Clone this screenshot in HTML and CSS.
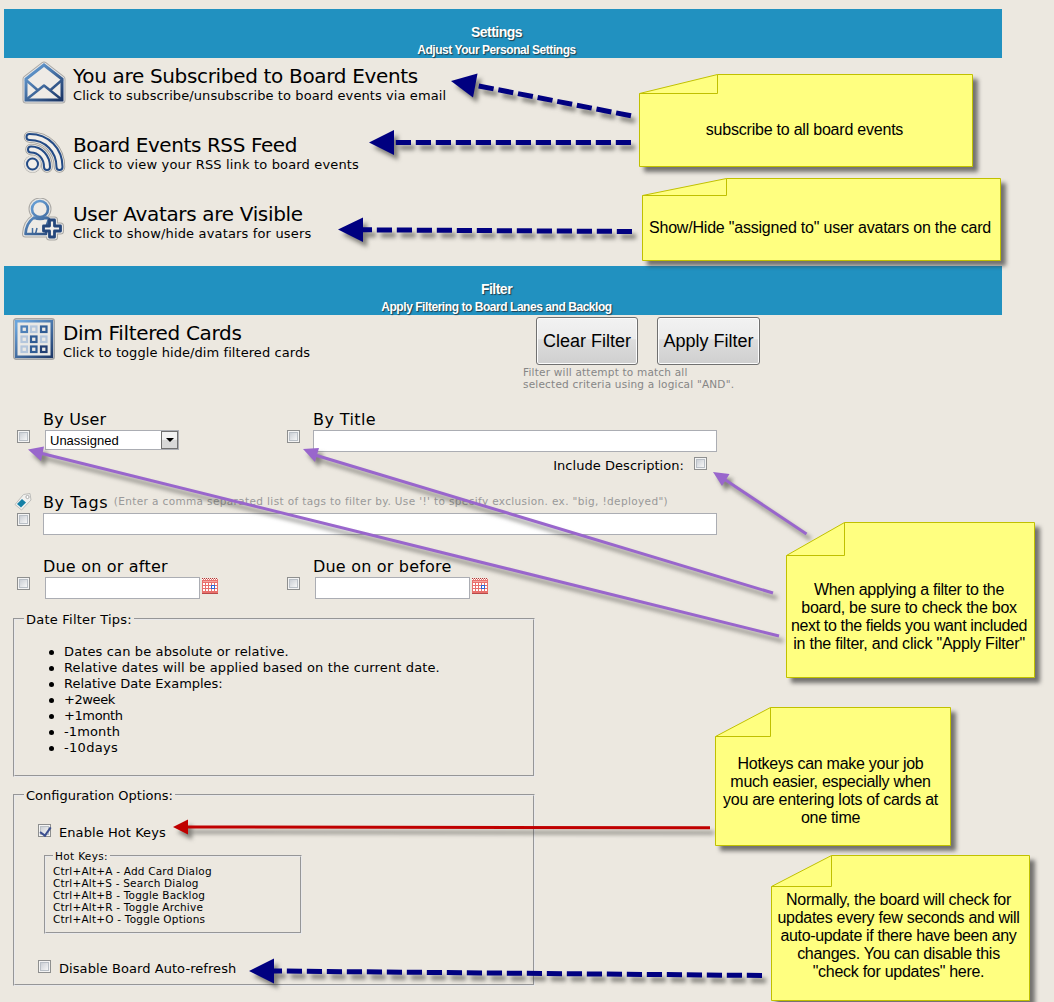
FILE: index.html
```html
<!DOCTYPE html>
<html lang="en">
<head>
<meta charset="utf-8">
<title>Board Settings</title>
<link rel="stylesheet" href="styles.css">
</head>
<body>
<main class="panel">
  <header class="bar"><h1>Settings</h1><p>Adjust Your Personal Settings</p></header>
  <section class="settings">
    <div class="option">
      <svg class="icon" width="46" height="46" viewBox="0 0 46 46">
        <defs><linearGradient id="blue" gradientUnits="userSpaceOnUse" x1="8" y1="4" x2="38" y2="42"><stop offset="0" stop-color="#6ba5dc"/><stop offset="1" stop-color="#1b3565"/></linearGradient></defs>
        <g fill="none" stroke-linejoin="round" stroke-linecap="round">
          <path d="M23 5 41 19V40H5V19Z" stroke="#aaa9a7" stroke-width="7"/>
          <path d="M23 5 41 19V40H5V19Z" stroke="#e8e8e8" stroke-width="5"/>
          <path d="M23 5 41 19V40H5V19Z" fill="#eeebe6" stroke="url(#blue)" stroke-width="3" stroke-linejoin="miter"/>
          <path d="M5 20 16.500 30M41 20 29.500 30M6 39 23 25.500 40 39" stroke="url(#blue)" stroke-width="2.500"/>
        </g>
      </svg>
      <div class="label subscribed"><h2>You are Subscribed to Board Events</h2><p>Click to subscribe/unsubscribe to board events via email</p></div>
    </div>
    <div class="option">
      <svg class="icon" width="46" height="46" viewBox="0 0 46 46">
        <g fill="none" stroke-linecap="round">
          <g stroke="#a09e99" stroke-width="11.500"><path d="M8.500 8C26 8 38.500 21 38.500 38M10 20.500C19 20.500 26 28 26 38"/><circle cx="11.500" cy="35" r="3"/></g>
          <g stroke="#e6e4e0" stroke-width="9.800"><path d="M8.500 8C26 8 38.500 21 38.500 38M10 20.500C19 20.500 26 28 26 38"/><circle cx="11.500" cy="35" r="3.500"/></g>
          <g stroke="#234b86" stroke-width="8"><path d="M8.500 8C26 8 38.500 21 38.500 38M10 20.500C19 20.500 26 28 26 38"/></g>
          <g stroke="#f1eee9" stroke-width="4"><path d="M8.500 8C26 8 38.500 21 38.500 38M10 20.500C19 20.500 26 28 26 38"/></g>
          <circle cx="11.500" cy="35" r="5.500" fill="#f1eee9" stroke="#234b86" stroke-width="2"/>
        </g>
      </svg>
      <div class="label rss"><h2>Board Events RSS Feed</h2><p>Click to view your RSS link to board events</p></div>
    </div>
    <div class="option last">
      <svg class="icon" width="46" height="46" viewBox="0 0 46 46">
        <g fill="none" stroke-linejoin="round">
          <g stroke="#aaa8a4" stroke-width="7"><circle cx="19" cy="11" r="8"/><path d="M13 20C8 23 5 28 4.500 36H27M28.500 22H33.500V28H39.500V33H33.500V39H28.500V33H22.500V28H28.500Z"/></g>
          <g stroke="#e8e7e4" stroke-width="5"><circle cx="19" cy="11" r="8"/><path d="M13 20C8 23 5 28 4.500 36H27M28.500 22H33.500V28H39.500V33H33.500V39H28.500V33H22.500V28H28.500Z"/></g>
          <g stroke="url(#blue)" stroke-width="2.600" fill="#eeebe6"><circle cx="19" cy="11" r="8"/><path d="M13 19.500C8 23 5 28 4.500 36H25V30L28 21 25 19.500C21 21.500 17 21.500 13 19.500Z"/><path d="M11.500 30V36M16 30 14.500 36" stroke-width="1.500"/></g>
          <path d="M28.500 22H33.500V28H39.500V33H33.500V39H28.500V33H22.500V28H28.500Z" fill="#f2efeb" stroke="#25477c" stroke-width="2.800"/>
        </g>
      </svg>
      <div class="label avatars"><h2>User Avatars are Visible</h2><p>Click to show/hide avatars for users</p></div>
    </div>
  </section>

  <header class="bar"><h1>Filter</h1><p>Apply Filtering to Board Lanes and Backlog</p></header>
  <section class="filter">
    <div class="tools">
      <svg class="grid-icon" width="42" height="42" viewBox="0 0 42 42">
        <rect x=".7" y=".7" width="40.600" height="40.600" rx="2.500" fill="#dcdcda" stroke="#a5a5a4" stroke-width="1.400"/>
        <rect x="3.200" y="3.200" width="35.600" height="35.600" fill="#eae9e6" stroke="url(#blue)" stroke-width="2.600"/>
        <g fill="none" stroke-width="2.200">
          <g stroke="#b4c6dc"><rect x="18" y="8.500" width="5.500" height="5.500"/><rect x="8.500" y="18.500" width="5.500" height="5.500"/><rect x="28" y="18.500" width="5.500" height="5.500"/><rect x="8.500" y="28.500" width="5.500" height="5.500"/></g>
          <rect x="8.500" y="8.500" width="5.500" height="5.500" stroke="#4e80b8"/><g stroke="#315c94"><rect x="28" y="8.500" width="5.500" height="5.500"/><rect x="18" y="18.500" width="5.500" height="5.500"/><rect x="18" y="28.500" width="5.500" height="5.500"/></g><rect x="28" y="28.500" width="5.500" height="5.500" stroke="#223f73"/>
        </g>
      </svg>
      <div class="label dim"><h2>Dim Filtered Cards</h2><p>Click to toggle hide/dim filtered cards</p></div>
      <div class="actions">
        <div class="buttons"><button class="btn clear">Clear Filter</button><button class="btn apply">Apply Filter</button></div>
        <p class="hint">Filter will attempt to match all<br>selected criteria using a logical "AND".</p>
      </div>
    </div>

    <div class="fields first">
      <input type="checkbox" class="check">
      <div class="field">
        <label>By User</label>
        <div class="select"><span>Unassigned</span><i class="drop"></i></div>
      </div>
      <input type="checkbox" class="check">
      <div class="field">
        <label class="by-title">By Title</label>
        <input type="text" class="text title">
        <div class="include"><span>Include Description:</span><input type="checkbox" class="check"></div>
      </div>
    </div>

    <div class="fields tags">
      <div class="tagcol">
        <svg width="20" height="20" viewBox="0 0 20 20"><path d="M2 12.500 10.500 2.500 17 1.500 18 8 8.500 18Z" fill="#f1f1ef" stroke="#bdbdba" stroke-linejoin="round"/><circle cx="14.500" cy="5" r="1.600" fill="#fff" stroke="#aaa"/><path d="M4 12 9 7 13 10.500 8 15.500Z" fill="#1580a6"/></svg>
        <input type="checkbox" class="check">
      </div>
      <div class="field">
        <label class="by-tags">By Tags <small>(Enter a comma separated list of tags to filter by. Use '!' to specify exclusion. ex. "big, !deployed")</small></label>
        <input type="text" class="text long">
      </div>
    </div>

    <div class="fields dates">
      <input type="checkbox" class="check">
      <div class="field">
        <label>Due on or after</label>
        <div class="date"><input type="text" class="text"><svg class="cal" width="16" height="16" viewBox="0 0 16 16"><g id="calendar"><rect y="1" width="16" height="15" fill="#e8706c"/><path d="M0 1.500H16" stroke="#fff" stroke-dasharray="1 1"/><path d="M0 .5H16" stroke="#b33" stroke-dasharray="1 1"/><path d="M1 3.500H15" stroke="#f6a39d"/><g fill="#fff"><path d="M1 5h2v2H1zM4 5h2v2H4zM7 5h2v2H7zM10 5h2v2h-2zM13 5h2v2h-2zM1 8h2v2H1zM4 8h2v2H4zM7 8h2v2H7zM10 8h2v2h-2zM13 8h2v2h-2zM1 11h2v2H1zM4 11h2v2H4zM7 11h2v2H7zM10 11h2v2h-2zM13 11h2v2h-2z"/></g><path d="M0 15.500H16" stroke="#b84a48"/><rect x="9.500" y="7.500" width="3" height="3" fill="#fff" stroke="#2b66d8"/></g></svg></div>
      </div>
      <input type="checkbox" class="check">
      <div class="field">
        <label>Due on or before</label>
        <div class="date"><input type="text" class="text"><svg class="cal" width="16" height="16" viewBox="0 0 16 16"><use href="#calendar"/></svg></div>
      </div>
    </div>

    <fieldset class="tips">
      <legend>Date Filter Tips:</legend>
      <ul>
        <li>Dates can be absolute or relative.</li>
        <li>Relative dates will be applied based on the current date.</li>
        <li class="snug">Relative Date Examples:</li>
        <li class="tight">+2week</li>
        <li class="tight">+1month</li>
        <li>-1month</li>
        <li class="loose">-10days</li>
      </ul>
    </fieldset>

    <fieldset class="config">
      <legend>Configuration Options:</legend>
      <div class="check-row"><input type="checkbox" class="check" checked><span>Enable Hot Keys</span></div>
      <fieldset class="hotkeys">
        <legend>Hot Keys:</legend>
        <p>Ctrl+Alt+A - Add Card Dialog</p>
        <p>Ctrl+Alt+S - Search Dialog</p>
        <p>Ctrl+Alt+B - Toggle Backlog</p>
        <p>Ctrl+Alt+R - Toggle Archive</p>
        <p>Ctrl+Alt+O - Toggle Options</p>
      </fieldset>
      <div class="check-row"><input type="checkbox" class="check"><span>Disable Board Auto-refresh</span></div>
    </fieldset>
  </section>
</main>

<svg class="arrows" width="1054" height="1002" viewBox="0 0 1054 1002">
  <g class="navy">
    <path class="dash" d="M631 115.800 478 85.800"/><path class="head" d="M451 81 477.500 73.500 473 97.500Z"/>
    <path class="dash" d="M631 142.500H394"/><path class="head" d="M369 142.500 394 130V155Z"/>
    <path class="dash" d="M632 231.500 362 229.800"/><path class="head" d="M338 229.500 363 217.500V242Z"/>
    <path class="dash" d="M762 975.500 274 971"/><path class="head" d="M249 971 274 958.500V983.500Z"/>
  </g>
  <g class="purple">
    <path d="M779 636 40 453"/><path class="head" d="M28 449.500 44 446.500 41 461Z"/>
    <path d="M773 593 315 455"/><path class="head" d="M303 449 319 448 315 462Z"/>
    <path d="M806.500 534 724 479"/><path class="head" d="M713 472 729.500 474 722 486Z"/>
  </g>
  <g class="red"><path d="M710 827.800 187 827"/><path class="head" d="M173 827 188 819.500V834.500Z"/></g>
</svg>

<aside class="note n1"><svg width="334" height="93"><path d="M.5 19.500 78.500.5H333.500V92.500H.500Z"/><path class="fold" d="M.5 19.500H78.500V.5"/></svg><p>subscribe to all board events</p></aside>
<aside class="note n2"><svg width="359" height="83"><path d="M.5 17.500 84.500.5H358.500V82.500H.500Z"/><path class="fold" d="M.5 17.500H84.500V.5"/></svg><p>Show/Hide "assigned to" user avatars on the card</p></aside>
<aside class="note n3"><svg width="249" height="156"><path d="M.5 33.500 58.500.5H248.500V155.500H.500Z"/><path class="fold" d="M.5 33.500H58.500V.5"/></svg><p>When applying a filter to the<br>board, be sure to check the box<br><span class="narrow">next to the fields you want included</span><br><span class="wide">in the filter, and click "Apply Filter"</span></p></aside>
<aside class="note n4"><svg width="236" height="139"><path d="M.5 29.500 55.500.5H235.500V138.500H.500Z"/><path class="fold" d="M.5 29.500H55.500V.5"/></svg><p>Hotkeys can make your job<br>much easier, especially when<br>you are entering lots of cards at<br>one time</p></aside>
<aside class="note n5"><svg width="259" height="146"><path d="M.5 31.500 60.500.5H258.500V145.500H.500Z"/><path class="fold" d="M.5 31.500H60.500V.5"/></svg><p>Normally, the board will check for<br>updates every few seconds and will<br><span class="narrow">auto-update if there have been any</span><br>changes. You can disable this<br>"check for updates" here.</p></aside>
</body>
</html>
```
FILE: styles.css
```css
* { box-sizing: border-box; }
body {
  margin: 0;
  position: relative;
  width: 1054px;
  height: 1002px;
  overflow: hidden;
  background: #ece8e0;
  color: #000;
  font: 13px/16px Verdana, "DejaVu Sans", sans-serif;
}
h1, h2, p, ul { margin: 0; padding: 0; font-weight: normal; }

.panel { width: 1002px; padding: 9px 0 0 4px; }
.bar {
  height: 49px;
  padding: 14px 13px 0 0;
  background: #2191c0;
  color: #fff;
  text-align: center;
  text-shadow: 1px 1px 1px #233c48;
  font-family: Arial, "Liberation Sans", sans-serif;
}
.bar h1 { font-size: 14px; line-height: 19px; font-weight: bold; letter-spacing: -.5px; }
.bar p { font-size: 12px; line-height: 17px; font-weight: bold; letter-spacing: -.45px; }

.option { display: flex; height: 69px; padding-left: 17px; }
.option.last { height: 70px; }
.icon { margin-top: 2px; flex: none; }
.label { padding-top: 6px; white-space: nowrap; }
.option .label { margin-left: 6px; }
.label h2 { font-size: 20px; line-height: 24px; letter-spacing: -.33px; }
.label p { font-size: 13px; line-height: 16px; letter-spacing: .16px; }
.subscribed p { letter-spacing: .09px; }
.rss h2 { letter-spacing: -.41px; }
.dim p { letter-spacing: .07px; }

.filter { padding-left: 9px; }
.tools { display: flex; height: 95px; }
.grid-icon { margin-top: 3px; flex: none; }
.tools .label { width: 468px; padding-left: 8px; }
.buttons { display: flex; gap: 19px; padding: 2px 0 0 13px; }
.btn {
  height: 48px;
  padding: 0;
  border: 1px solid #707070;
  border-radius: 3px;
  background: linear-gradient(#f2f2f2 0, #ebebeb 46%, #dddddd 47%, #cfcfcf 100%);
  box-shadow: inset 0 0 0 1px #fcfcfc;
  font: 18px Arial, "Liberation Sans", sans-serif;
  white-space: nowrap;
}
.clear { width: 102px; }
.apply { width: 103px; }
.hint { margin-top: 1px; font-size: 10.5px; line-height: 12px; letter-spacing: .2px; color: #868686; white-space: nowrap; }

.fields { display: flex; padding-left: 4px; }
.fields.first { height: 83px; }
.fields.tags { height: 64px; }
.fields.dates { height: 55px; }
.check {
  appearance: none;
  width: 13px;
  height: 13px;
  margin: 20px 13px 0 0;
  flex: none;
  border: 1px solid #8e8f8f;
  background: linear-gradient(135deg, #cbcfd5, #f6f6f6) 2px 2px / 7px 7px no-repeat, #f4f4f4;
  box-shadow: inset 0 0 0 1px #f4f4f4, inset 0 0 0 2px #b9bfc6;
}
.check:checked::after {
  content: "";
  display: block;
  width: 5px;
  height: 9px;
  margin: 0 0 0 3px;
  border: solid #3c4f8f;
  border-width: 0 2px 2px 0;
  transform: rotate(35deg);
}
.field { width: 244px; }
.field:last-child { width: auto; }
.field label { display: block; height: 20px; font-size: 16px; line-height: 20px; letter-spacing: .2px; white-space: nowrap; }
.field .by-title { letter-spacing: .4px; }
.field .by-tags { letter-spacing: .6px; }
.text { display: block; height: 22px; margin: 0; padding: 0; border: 1px solid #abadb3; background: #fff; }
.title { width: 404px; }
.long { width: 674px; }
.select {
  display: flex;
  justify-content: space-between;
  width: 134px;
  height: 20px;
  margin-left: 2px;
  padding-left: 4px;
  border: 1px solid #abadb3;
  background: #fff;
  font: 13px/19px Arial, "Liberation Sans", sans-serif;
}
.drop {
  display: grid;
  place-items: center;
  width: 17px;
  height: 18px;
  border: 1px solid #707070;
  background: linear-gradient(#f2f2f2 46%, #d8d8d8 50%);
}
.drop::after { content: ""; border: 4px solid transparent; border-top-color: #000; border-bottom: 0; }
.include { display: flex; justify-content: flex-end; gap: 10px; padding: 5px 10px 0 0; line-height: 18px; letter-spacing: .05px; }
.include .check { margin: 0; }
.tagcol { width: 26px; height: 33px; }
.tagcol svg { display: block; margin: -1px 0 0 -4px; }
.tagcol .check { display: block; margin-top: 1px; }
.field small { position: relative; top: -3px; font-size: 10.5px; letter-spacing: .362px; color: #999; }
.date { display: flex; gap: 2px; padding-left: 2px; }
.date .text { width: 155px; }
.cal { margin-top: 1px; }

fieldset { margin: 0; min-width: 0; border: 2px groove #e9e9eb; }
legend { height: 14px; line-height: 16px; padding: 0 2px; }
.tips { width: 522px; height: 165px; padding: 18px 9px 0; letter-spacing: .13px; }
.tips legend { letter-spacing: .22px; }
.tips ul { padding-left: 40px; list-style: none; }
.tips li { display: flex; align-items: center; height: 16px; }
.tips .snug { letter-spacing: -.03px; }
.tips .tight { letter-spacing: -.4px; }
.tips .loose { letter-spacing: .3px; }
.tips li::before { content: ""; width: 5px; height: 5px; margin: 0 10px 0 -15px; border-radius: 50%; background: #000; }
.config { width: 522px; height: 198px; margin-top: 11px; padding: 22px 9px 0; }
.check-row { display: flex; gap: 8px; height: 16px; padding-left: 14px; line-height: 18px; letter-spacing: .07px; }
.check-row .check { margin: 0; }
.hotkeys { width: 258px; height: 84px; margin: 10px 0 26px 20px; padding: 3px 7px 0; font-size: 10.5px; line-height: 12px; letter-spacing: .2px; }
.hotkeys legend { height: 12px; line-height: 13px; letter-spacing: .34px; }

.arrows { position: absolute; left: 0; top: 0; filter: drop-shadow(4px 5px 2px rgba(60, 60, 55, .6)); }
.arrows path { fill: none; }
.arrows .dash { stroke-width: 5; stroke-dasharray: 15.200 4.800; }
.navy { stroke: #000080; }
.arrows .navy .head { fill: #000080; stroke: none; }
.purple { stroke: #9966cc; stroke-width: 3; }
.arrows .purple .head { fill: #9966cc; stroke: none; }
.red { stroke: #c00000; stroke-width: 3; }
.arrows .red .head { fill: #c00000; stroke: none; }

.note { position: absolute; font: 16px/18px Arial, "Liberation Sans", sans-serif; letter-spacing: -.28px; text-align: center; white-space: nowrap; }
.note svg { position: absolute; left: 0; top: 0; filter: drop-shadow(5px 5px 2px rgba(50, 50, 50, .65)); overflow: visible; }
.note path { fill: #ffff80; stroke: #c0c000; }
.note .fold { fill: none; }
.note p { position: relative; }
.narrow { letter-spacing: -.36px; }
.wide { letter-spacing: -.21px; }
.n1 { left: 639px; top: 74px; width: 334px; padding: 47px 3px 0 0; letter-spacing: -.22px; }
.n2 { left: 642px; top: 178px; width: 359px; padding: 41px 3px 0 0; letter-spacing: -.21px; }
.n3 { left: 786px; top: 522px; width: 249px; padding: 59px 3px 0 0; }
.n4 { left: 715px; top: 707px; width: 236px; padding: 48px 5px 0 0; }
.n5 { left: 771px; top: 855px; width: 259px; padding: 36px 4px 0 0; }
```
